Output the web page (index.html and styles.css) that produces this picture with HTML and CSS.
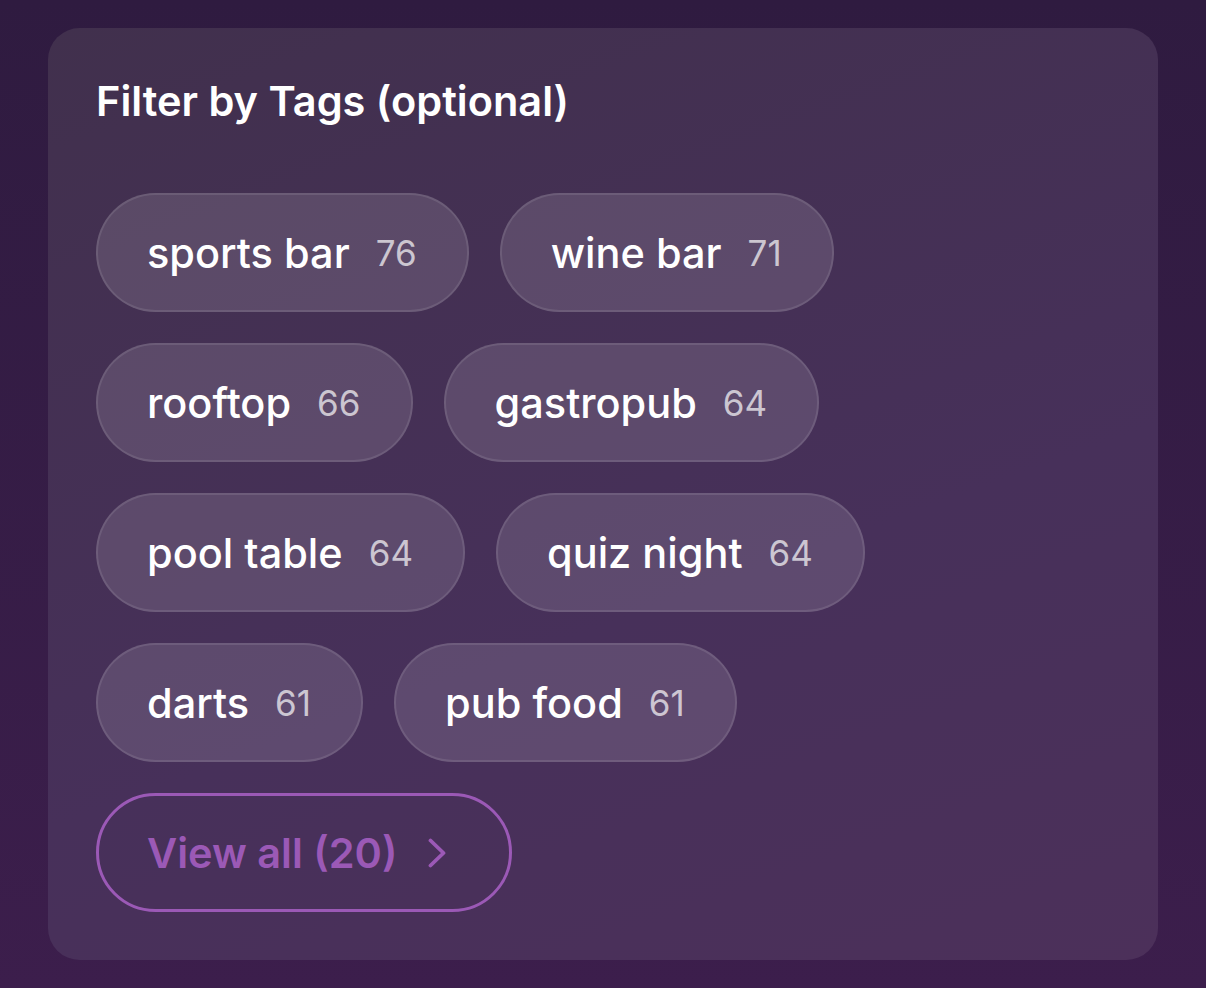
FILE: index.html
```html
<!DOCTYPE html>
<html lang="en">
<head>
<meta charset="utf-8">
<title>Filter by Tags</title>
<link rel="stylesheet" href="styles.css">
</head>
<body>
<main class="page">
  <section class="card">
    <h2 class="title">Filter by Tags (optional)</h2>
    <div class="tags">
      <button class="chip"><span class="label">sports bar</span><span class="count">76</span></button>
      <button class="chip"><span class="label">wine bar</span><span class="count">71</span></button>
      <button class="chip"><span class="label">rooftop</span><span class="count">66</span></button>
      <button class="chip"><span class="label">gastropub</span><span class="count">64</span></button>
      <button class="chip"><span class="label">pool table</span><span class="count">64</span></button>
      <button class="chip"><span class="label">quiz night</span><span class="count">64</span></button>
      <button class="chip"><span class="label">darts</span><span class="count">61</span></button>
      <button class="chip"><span class="label">pub food</span><span class="count">61</span></button>
    </div>
    <button class="view-all">View all (20)
      <svg class="chev" width="18" height="30" viewBox="0 0 18 30" aria-hidden="true"><path d="M2.5 2.5 L15.5 15 L2.5 27.5" fill="none" stroke="currentColor" stroke-width="3.8" stroke-linecap="round" stroke-linejoin="round"/></svg>
    </button>
  </section>
</main>
</body>
</html>
```

FILE: styles.css
```css
* { box-sizing: border-box; }
html, body { margin: 0; padding: 0; }
body {
  width: 1206px;
  height: 988px;
  background: linear-gradient(180deg, #2f1b40 0%, #3c1e4c 100%);
  font-family: Inter, "Noto Sans", "Liberation Sans", sans-serif;
  overflow: hidden;
}
.page {
  padding: 28px 48px;
}
.card {
  height: 932px;
  border-radius: 32px;
  background: linear-gradient(160deg, #41304d 0%, #47305a 60%, #4c305a 100%);
  padding: 49px 48px 48px;
}
.title {
  margin: 0 0 68px;
  color: #ffffff;
  font-size: 41.5px;
  font-weight: 600;
  line-height: 48px;
}
.tags {
  display: flex;
  flex-wrap: wrap;
  gap: 31px;
  max-width: 800px;
}
.chip {
  display: inline-flex;
  align-items: center;
  gap: 26px;
  height: 119px;
  padding: 0 50px 0 49px;
  border-radius: 60px;
  background: rgba(255, 255, 255, 0.13);
  border: 2px solid rgba(255, 255, 255, 0.1);
  font-family: inherit;
  cursor: pointer;
}
.label {
  color: #ffffff;
  font-size: 41.5px;
  font-weight: 500;
}
.count {
  color: rgba(255, 255, 255, 0.7);
  font-size: 35px;
  font-weight: 400;
}
.view-all {
  margin-top: 31px;
  display: inline-flex;
  align-items: center;
  gap: 31px;
  height: 119px;
  padding: 0 63px 0 48px;
  border-radius: 60px;
  background: transparent;
  border: 3px solid #9b59b6;
  color: #9b59b6;
  font-family: inherit;
  font-size: 41.5px;
  font-weight: 600;
  cursor: pointer;
}
.chev { display: block; }
```
